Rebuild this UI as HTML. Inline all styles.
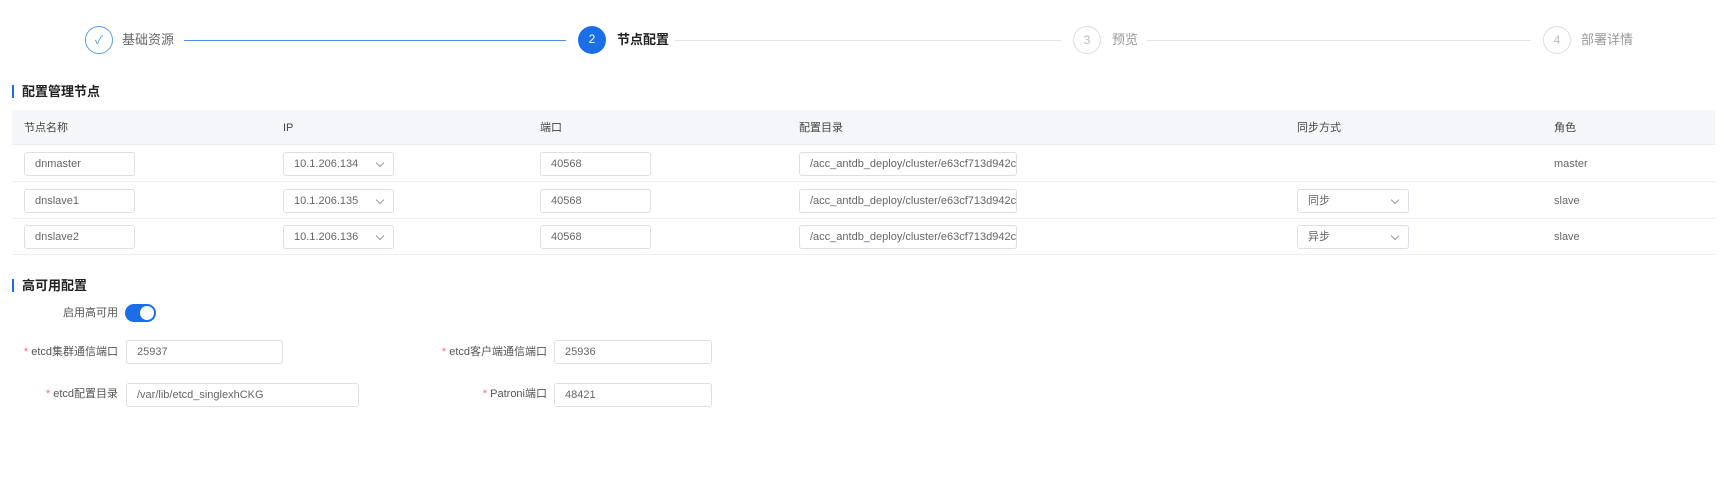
<!DOCTYPE html>
<html><head><meta charset="utf-8"><style>
*{box-sizing:border-box;margin:0;padding:0}
body{width:1724px;height:483px;background:#fff;font-family:"Liberation Sans","Noto Sans CJK SC",sans-serif;font-size:12px;color:#555;position:relative;overflow:hidden}
.a{position:absolute}
.c{position:absolute;width:28px;height:28px;border-radius:50%;top:26px;text-align:center;line-height:26px;font-size:12px}
.st{position:absolute;top:31px;font-size:13px;line-height:18px}
.ln{position:absolute;top:40px;height:1px}
.title{position:absolute;left:12px;font-size:13px;font-weight:bold;color:#222;padding-left:8px;border-left:2px solid #1a6fe8;line-height:13px;height:13px}
.in{position:absolute;height:24px;border:1px solid #dcdfe6;border-radius:3px;padding-left:10px;line-height:22px;color:#666;font-size:11px;background:#fff;overflow:hidden;white-space:nowrap}
.sel::after{content:"";position:absolute;right:10px;top:7px;width:5px;height:5px;border-right:1px solid #999;border-bottom:1px solid #999;transform:rotate(45deg)}
.th{position:absolute;top:120px;font-size:11px;line-height:16px;color:#444}
.td{position:absolute;font-size:11px;line-height:16px;color:#666}
.lab{position:absolute;text-align:right;font-size:11px;line-height:16px;color:#555}
.lab b{color:#f56c6c;font-weight:normal}
</style></head><body>
<div class="c" style="left:85px;border:1px solid #5b9bf0;color:#5b9bf0">✓</div>
<div class="st" style="left:122px;color:#666">基础资源</div>
<div class="ln" style="left:184px;width:382px;background:#4d8fec"></div>
<div class="c" style="left:578px;background:#1a6fe8;color:#fff">2</div>
<div class="st" style="left:617px;color:#222;font-weight:bold">节点配置</div>
<div class="ln" style="left:675px;width:386px;background:#e5e5e5"></div>
<div class="c" style="left:1073px;border:1px solid #ddd;color:#bbb">3</div>
<div class="st" style="left:1112px;color:#999">预览</div>
<div class="ln" style="left:1147px;width:384px;background:#e5e5e5"></div>
<div class="c" style="left:1543px;border:1px solid #ddd;color:#bbb">4</div>
<div class="st" style="left:1581px;color:#999">部署详情</div>

<div class="title" style="top:85px">配置管理节点</div>
<div class="a" style="left:12px;top:110px;width:1703px;height:35px;background:#f4f6fa;border-bottom:1px solid #ebeef5"></div>
<div class="th" style="left:24px">节点名称</div>
<div class="th" style="left:283px">IP</div>
<div class="th" style="left:540px">端口</div>
<div class="th" style="left:799px">配置目录</div>
<div class="th" style="left:1297px">同步方式</div>
<div class="th" style="left:1554px">角色</div>
<div class="a" style="left:12px;top:181px;width:1703px;height:1px;background:#ebeef5"></div>
<div class="a" style="left:12px;top:218px;width:1703px;height:1px;background:#ebeef5"></div>
<div class="a" style="left:12px;top:254px;width:1703px;height:1px;background:#ebeef5"></div>

<div class="in" style="left:24px;top:152px;width:111px">dnmaster</div>
<div class="in sel" style="left:283px;top:152px;width:111px">10.1.206.134</div>
<div class="in" style="left:540px;top:152px;width:111px">40568</div>
<div class="in" style="left:799px;top:152px;width:218px">/acc_antdb_deploy/cluster/e63cf713d942c</div>
<div class="td" style="left:1554px;top:156px">master</div>

<div class="in" style="left:24px;top:189px;width:111px">dnslave1</div>
<div class="in sel" style="left:283px;top:189px;width:111px">10.1.206.135</div>
<div class="in" style="left:540px;top:189px;width:111px">40568</div>
<div class="in" style="left:799px;top:189px;width:218px">/acc_antdb_deploy/cluster/e63cf713d942c</div>
<div class="in sel" style="left:1297px;top:189px;width:112px">同步</div>
<div class="td" style="left:1554px;top:193px">slave</div>

<div class="in" style="left:24px;top:225px;width:111px">dnslave2</div>
<div class="in sel" style="left:283px;top:225px;width:111px">10.1.206.136</div>
<div class="in" style="left:540px;top:225px;width:111px">40568</div>
<div class="in" style="left:799px;top:225px;width:218px">/acc_antdb_deploy/cluster/e63cf713d942c</div>
<div class="in sel" style="left:1297px;top:225px;width:112px">异步</div>
<div class="td" style="left:1554px;top:229px">slave</div>

<div class="title" style="top:279px">高可用配置</div>
<div class="lab" style="left:0;width:118px;top:305px">启用高可用</div>
<div class="a" style="left:125px;top:304px;width:31px;height:18px;border-radius:9px;background:#1a6fe8"><div class="a" style="right:2px;top:2px;width:14px;height:14px;border-radius:50%;background:#fff"></div></div>

<div class="lab" style="left:0;width:118px;top:344px"><b>* </b>etcd集群通信端口</div>
<div class="in" style="left:126px;top:340px;width:157px">25937</div>
<div class="lab" style="left:400px;width:147px;top:344px"><b>* </b>etcd客户端通信端口</div>
<div class="in" style="left:554px;top:340px;width:158px">25936</div>

<div class="lab" style="left:0;width:118px;top:386px"><b>* </b>etcd配置目录</div>
<div class="in" style="left:126px;top:383px;width:233px">/var/lib/etcd_singlexhCKG</div>
<div class="lab" style="left:400px;width:147px;top:386px"><b>* </b>Patroni端口</div>
<div class="in" style="left:554px;top:383px;width:158px">48421</div>
</body></html>
